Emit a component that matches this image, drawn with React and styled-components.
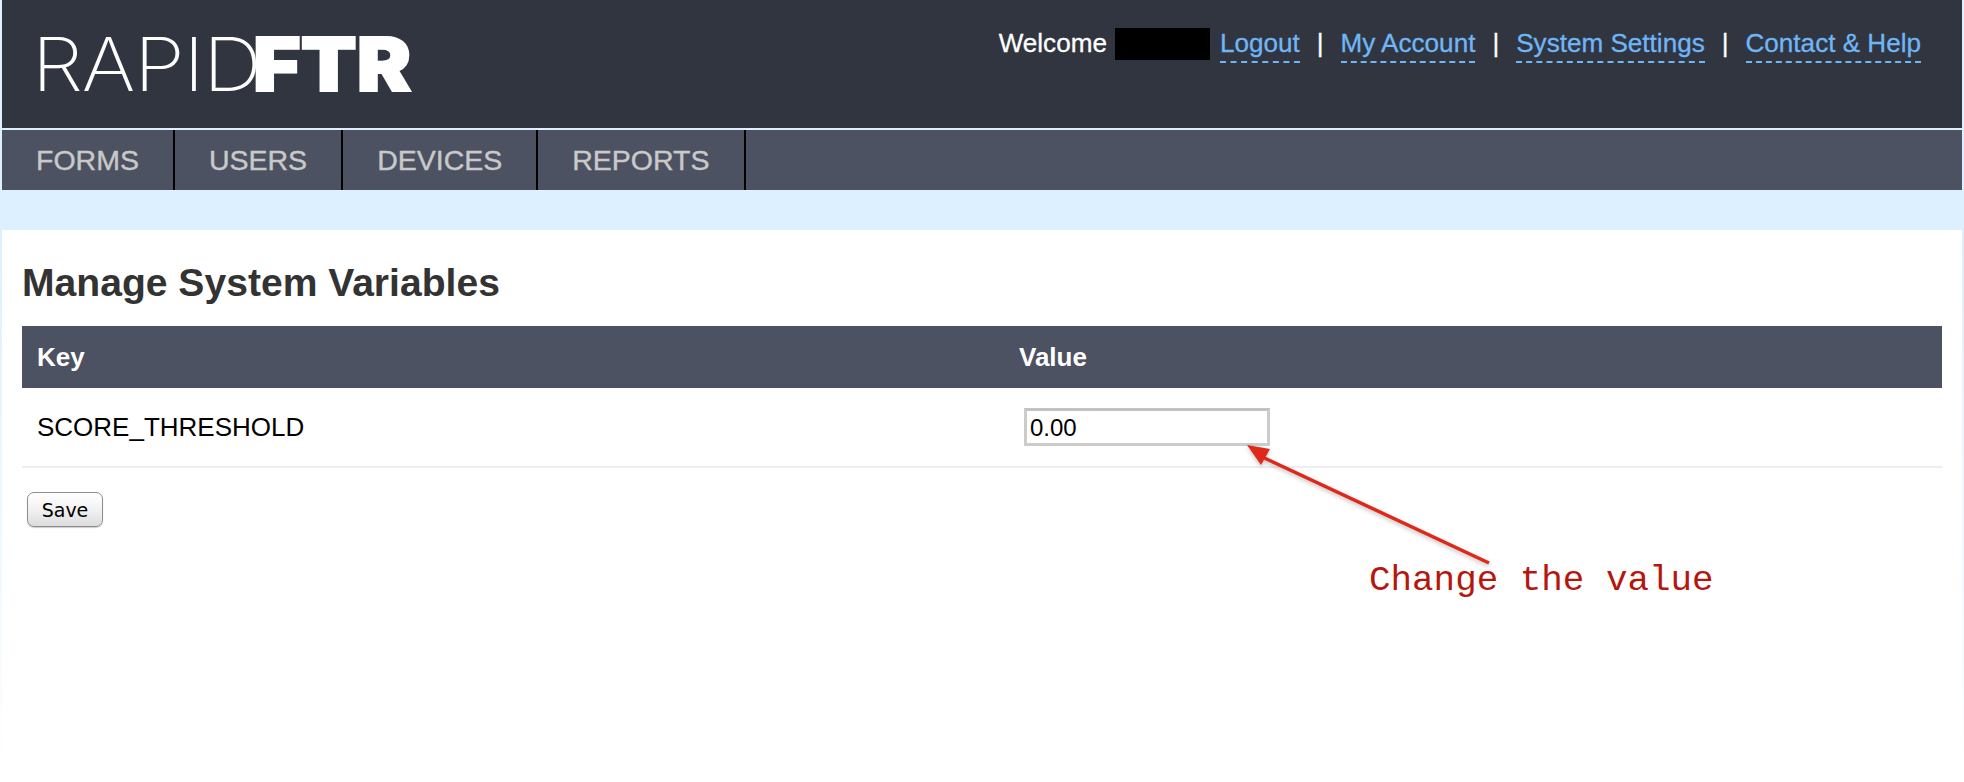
import React from 'react';
import styled, { createGlobalStyle } from 'styled-components';

const GlobalStyle = createGlobalStyle`
    html, body {
        margin: 0;
        padding: 0;
        background: #fff;
    }
    body {
        font-family: "Liberation Sans", Arial, sans-serif;
    }
`;

const Page = styled.div`
    position: relative;
    box-sizing: border-box;
    height: 782px;
    overflow: hidden;
    padding: 0 2px;
    background: linear-gradient(#ddf0ff 0, #ddf0ff 230px, #fff 782px);
`;

const Header = styled.header`
    display: flex;
    justify-content: space-between;
    align-items: flex-start;
    height: 128px;
    background: #31353f;
`;

const Logo = styled.div`
    display: flex;
    margin: 19px 0 0 30px;
    color: #fff;
    font-family: Inter, sans-serif;
    font-size: 74px;
    line-height: 90px;
    transform: scaleX(1.103);
    transform-origin: left center;
`;

const LogoThin = styled.span`
    margin-right: -7px;
    font-weight: 200;
    letter-spacing: -1px;
`;

const LogoBold = styled.span`
    font-weight: 900;
    letter-spacing: 0;
    -webkit-text-stroke: 2px #fff;
`;

const UserBar = styled.div`
    display: flex;
    align-items: flex-start;
    margin: 28px 41px 0 0;
    font-size: 26.1px;
    line-height: 30px;
    color: #fff;
    -webkit-text-stroke: .3px;
`;

const Redacted = styled.span`
    width: 95px;
    height: 32px;
    margin: 0 10px 0 8px;
    background: #000;
`;

const TopLink = styled.a`
    padding-bottom: 3px;
    color: #6fb6f7;
    border-bottom: 2px dashed #6fb6f7;
`;

const Pipe = styled.span`
    margin: 0 17px;
`;

const Nav = styled.nav`
    display: flex;
    height: 60px;
    margin-top: 2px;
    background: #4c5261;
`;

const NavItem = styled.a`
    padding: 0 34px;
    border-right: 2px solid #000;
    font-size: 28.5px;
    line-height: 60px;
    color: #c9c9c9;
    -webkit-text-stroke: .4px;
`;

const Band = styled.div`
    height: 40px;
`;

const Content = styled.main`
    height: 552px;
    padding: 0 20px;
    background: #fff;
`;

const Title = styled.h1`
    margin: 0;
    padding-top: 31px;
    height: 96px;
    box-sizing: border-box;
    font-size: 39.1px;
    line-height: 44px;
    font-weight: bold;
    color: #333;
`;

const Table = styled.div`
    display: grid;
    grid-template-columns: 982px 1fr;
`;

const HeadCell = styled.div`
    height: 62px;
    padding-left: 15px;
    background: #4c5261;
    font-size: 26px;
    font-weight: bold;
    line-height: 62px;
    color: #fff;
`;

const Cell = styled.div`
    display: flex;
    align-items: center;
    height: 78px;
    padding-left: 15px;
    border-bottom: 2px solid #eee;
    font-size: 26px;
    color: #000;
`;

const ValueInput = styled.input`
    box-sizing: border-box;
    width: 246px;
    height: 38px;
    margin: 0 0 0 5px;
    padding: 2px 3px 0;
    border: 3px solid #ccc;
    border-top-color: #c2c2c2;
    background: #fff;
    font-family: "Liberation Sans", Arial, sans-serif;
    font-size: 24px;
    color: #000;
    outline: none;
`;

const SaveButton = styled.button`
    display: block;
    box-sizing: border-box;
    width: 76px;
    height: 35px;
    margin: 24px 0 0 5px;
    padding: 0;
    border: 1px solid #8e8e8e;
    border-radius: 7px;
    background: linear-gradient(#fff, #f2f2f2 50%, #dcdcdc);
    box-shadow: 0 1px 1px rgba(0, 0, 0, .2);
    font-family: "DejaVu Sans", sans-serif;
    font-size: 19px;
    color: #000;
`;

const Arrow = styled.svg`
    position: absolute;
    left: 1230px;
    top: 430px;
    filter: drop-shadow(0 2px 2px rgba(0, 0, 0, .25));
`;

const Annotation = styled.div`
    position: absolute;
    left: 1369px;
    top: 560px;
    font-family: "Liberation Mono", "Courier New", monospace;
    font-size: 35.9px;
    line-height: 42px;
    color: #b5170f;
`;

const links = ['My Account', 'System Settings', 'Contact & Help'];
const navItems = ['FORMS', 'USERS', 'DEVICES', 'REPORTS'];

export default function App() {
    return (
        <Page>
            <GlobalStyle />
            <Header>
                <Logo>
                    <LogoThin>RAPID</LogoThin>
                    <LogoBold>FTR</LogoBold>
                </Logo>
                <UserBar>
                    Welcome
                    <Redacted />
                    <TopLink>Logout</TopLink>
                    {links.map(link => (
                        <React.Fragment key={link}>
                            <Pipe>|</Pipe>
                            <TopLink>{link}</TopLink>
                        </React.Fragment>
                    ))}
                </UserBar>
            </Header>
            <Nav>
                {navItems.map(item => <NavItem key={item}>{item}</NavItem>)}
            </Nav>
            <Band />
            <Content>
                <Title>Manage System Variables</Title>
                <Table>
                    <HeadCell>Key</HeadCell>
                    <HeadCell>Value</HeadCell>
                    <Cell>SCORE_THRESHOLD</Cell>
                    <Cell>
                        <ValueInput defaultValue="0.00" />
                    </Cell>
                </Table>
                <SaveButton>Save</SaveButton>
            </Content>
            <Arrow width="280" height="150" viewBox="0 0 280 150">
                <line x1="259" y1="133" x2="28" y2="25" stroke="#e0281a" strokeWidth="3.5" />
                <polygon points="17,15 40,19 31,35" fill="#e0281a" />
            </Arrow>
            <Annotation>Change the value</Annotation>
        </Page>
    );
}
